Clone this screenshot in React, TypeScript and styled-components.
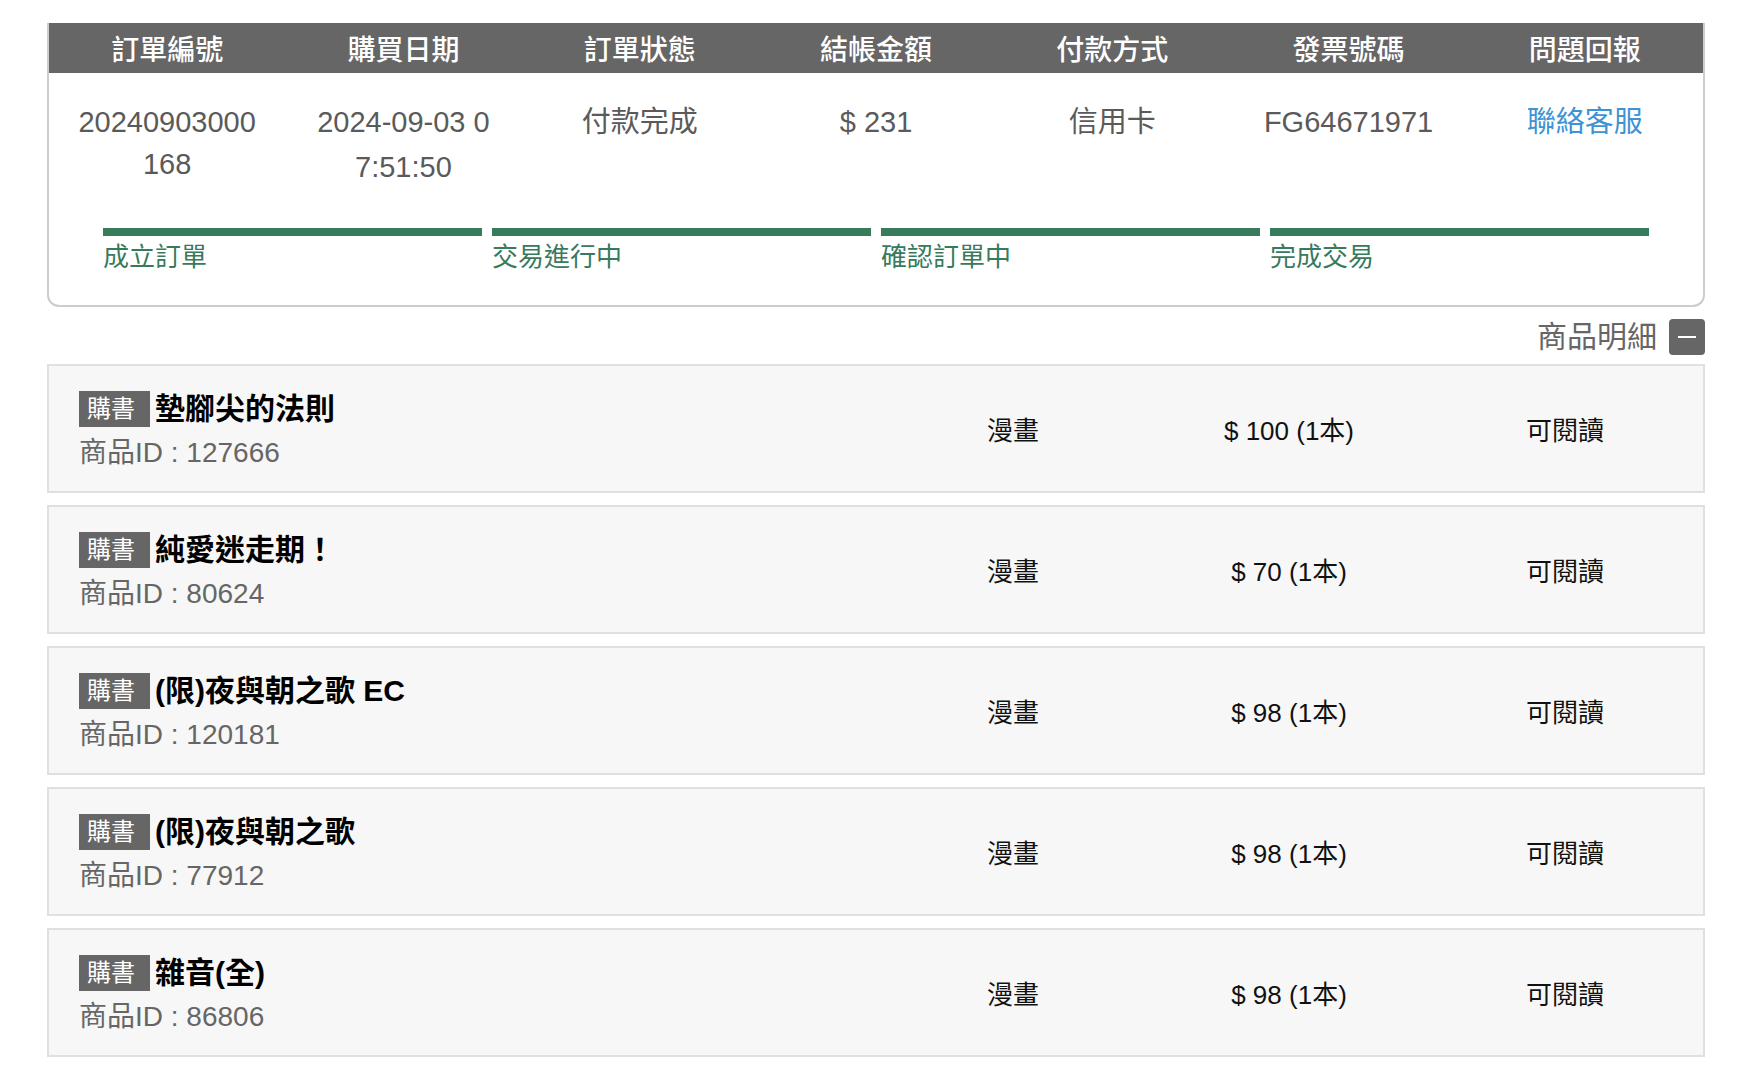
import React from "react";
import styled, { createGlobalStyle } from "styled-components";

const GlobalStyle = createGlobalStyle`
  html, body { margin: 0; padding: 0; background: #ffffff; }
  body {
    font-family: "Liberation Sans", "Noto Sans CJK TC", sans-serif;
    color: #555555;
  }
  * { box-sizing: border-box; }
`;

const Page = styled.div`
  width: 1658px;
  margin: 23px 0 0 47px;
`;

const OrderCard = styled.section`
  border: 2px solid #cccccc;
  border-top: 0;
  border-radius: 0 0 12px 12px;
  padding-bottom: 30px;
`;

const HeaderBar = styled.div`
  display: grid;
  grid-template-columns: repeat(7, 1fr);
  height: 50px;
  background: #666666;
`;

const HeaderCell = styled.div`
  display: flex;
  align-items: center;
  justify-content: center;
  color: #ffffff;
  font-size: 28px;
  font-weight: 500;
`;

const BodyRow = styled.div`
  display: grid;
  grid-template-columns: repeat(7, 1fr);
  align-items: start;
  padding-top: 28px;
`;

const BodyCell = styled.div<{ $loose?: boolean }>`
  padding: 0 27px;
  margin: ${(p) => (p.$loose ? "-1px 0 -5px" : "0")};
  text-align: center;
  font-size: 29px;
  line-height: ${(p) => (p.$loose ? "45px" : "42px")};
  color: #5a5a5a;
  word-break: break-all;
`;

const ServiceLink = styled.a`
  color: #3d93d4;
  text-decoration: none;
  cursor: pointer;
`;

const Progress = styled.div`
  display: grid;
  grid-template-columns: repeat(4, 1fr);
  column-gap: 10px;
  padding: 0 54px;
  margin-top: 43px;
`;

const Step = styled.div`
  display: flex;
  flex-direction: column;
`;

const StepBar = styled.div<{ $active: boolean }>`
  height: 8px;
  background: ${(p) => (p.$active ? "#377a5c" : "#d6d6d6")};
`;

const StepLabel = styled.div`
  margin-top: 3px;
  font-size: 26px;
  line-height: 36px;
  color: #377a5c;
`;

const DetailToggle = styled.div`
  display: flex;
  justify-content: flex-end;
  align-items: center;
  gap: 12px;
  margin: 12px 0 9px;
`;

const DetailLabel = styled.span`
  font-size: 30px;
  line-height: 36px;
  color: #666666;
`;

const MinusButton = styled.button`
  position: relative;
  width: 36px;
  height: 36px;
  border: 0;
  padding: 0;
  border-radius: 4px;
  background: #666666;
  cursor: pointer;
  &::before {
    content: "";
    position: absolute;
    left: 9px;
    right: 9px;
    top: 17px;
    height: 2px;
    background: #ffffff;
  }
`;

const ItemList = styled.div`
  display: flex;
  flex-direction: column;
  gap: 12px;
`;

const ItemRow = styled.div`
  display: grid;
  grid-template-columns: 1fr 276px 276px 276px;
  height: 129px;
  background: #f7f7f7;
  border: 2px solid #e0e0e0;
`;

const ItemInfo = styled.div`
  padding: 25px 30px 0;
`;

const TitleLine = styled.div`
  display: flex;
  align-items: flex-start;
  height: 36px;
  gap: 5px;
`;

const Badge = styled.span`
  display: inline-block;
  height: 36px;
  line-height: 36px;
  padding: 0 15px 0 8px;
  background: #666666;
  color: #ffffff;
  font-size: 24px;
`;

const Title = styled.span`
  font-size: 30px;
  line-height: 36px;
  font-weight: 700;
  color: #000000;
`;

const ItemId = styled.div`
  margin-top: 6px;
  font-size: 28px;
  line-height: 40px;
  color: #666666;
`;

const ItemCell = styled.div`
  display: flex;
  align-items: center;
  justify-content: center;
  font-size: 26px;
  color: #111111;
`;

const headers = ["訂單編號", "購買日期", "訂單狀態", "結帳金額", "付款方式", "發票號碼", "問題回報"];
const steps = ["成立訂單", "交易進行中", "確認訂單中", "完成交易"];

const items = [
  { title: "墊腳尖的法則", id: "127666", price: "$ 100 (1本)" },
  { title: "純愛迷走期！", id: "80624", price: "$ 70 (1本)" },
  { title: "(限)夜與朝之歌 EC", id: "120181", price: "$ 98 (1本)" },
  { title: "(限)夜與朝之歌", id: "77912", price: "$ 98 (1本)" },
  { title: "雜音(全)", id: "86806", price: "$ 98 (1本)" },
];

export default function App() {
  return (
    <>
      <GlobalStyle />
      <Page>
        <OrderCard>
          <HeaderBar>
            {headers.map((h) => (
              <HeaderCell key={h}>{h}</HeaderCell>
            ))}
          </HeaderBar>
          <BodyRow>
            <BodyCell>20240903000168</BodyCell>
            <BodyCell $loose>2024-09-03 07:51:50</BodyCell>
            <BodyCell>付款完成</BodyCell>
            <BodyCell>$ 231</BodyCell>
            <BodyCell>信用卡</BodyCell>
            <BodyCell>FG64671971</BodyCell>
            <BodyCell>
              <ServiceLink>聯絡客服</ServiceLink>
            </BodyCell>
          </BodyRow>
          <Progress>
            {steps.map((s) => (
              <Step key={s}>
                <StepBar $active />
                <StepLabel>{s}</StepLabel>
              </Step>
            ))}
          </Progress>
        </OrderCard>
        <DetailToggle>
          <DetailLabel>商品明細</DetailLabel>
          <MinusButton aria-label="收合" />
        </DetailToggle>
        <ItemList>
          {items.map((it) => (
            <ItemRow key={it.id}>
              <ItemInfo>
                <TitleLine>
                  <Badge>購書</Badge>
                  <Title>{it.title}</Title>
                </TitleLine>
                <ItemId>商品ID : {it.id}</ItemId>
              </ItemInfo>
              <ItemCell>漫畫</ItemCell>
              <ItemCell>{it.price}</ItemCell>
              <ItemCell>可閱讀</ItemCell>
            </ItemRow>
          ))}
        </ItemList>
      </Page>
    </>
  );
}
